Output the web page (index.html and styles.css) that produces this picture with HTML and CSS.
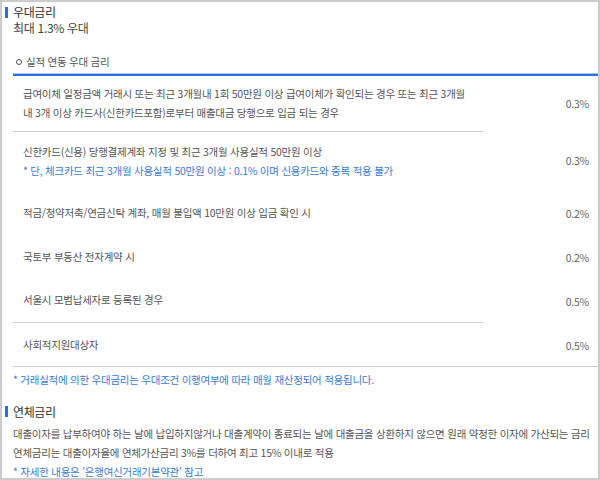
FILE: index.html
```html
<!DOCTYPE html>
<html lang="ko">
<head>
    <meta charset="UTF-8">
    <meta name="viewport" content="width=device-width, initial-scale=1.0">
    <title>우대금리</title>
    <link rel="stylesheet" href="styles.css">
</head>
<body>
    <div class="frame">
        <div class="sec-title"><span class="bar"></span>우대금리</div>
        <p class="sub">최대 1.3% 우대</p>

        <div class="group-title"><span class="dot"></span>실적 연동 우대 금리</div>

        <table class="rate-table">
            <tr class="row-wide">
                <td class="desc line">급여이체 일정금액 거래시 또는 최근 3개월내 1회 50만원 이상 급여이체가 확인되는 경우 또는 최근 3개월<br>내 3개 이상 카드사(신한카드포함)로부터 매출대금 당행으로 입금 되는 경우</td>
                <td class="rate">0.3%</td>
            </tr>
            <tr class="row-card">
                <td class="desc">신한카드(신용) 당행결제계좌 지정 및 최근 3개월 사용실적 50만원 이상
                    <div class="note">* 단, 체크카드 최근 3개월 사용실적 50만원 이상 : 0.1% 이며 신용카드와 중복 적용 불가</div>
                </td>
                <td class="rate">0.3%</td>
            </tr>
            <tr>
                <td class="desc">적금/청약저축/연금신탁 계좌, 매월 불입액 10만원 이상 입금 확인 시</td>
                <td class="rate">0.2%</td>
            </tr>
            <tr>
                <td class="desc">국토부 부동산 전자계약 시</td>
                <td class="rate">0.2%</td>
            </tr>
            <tr>
                <td class="desc line">서울시 모범납세자로 등록된 경우</td>
                <td class="rate">0.5%</td>
            </tr>
            <tr class="last">
                <td class="desc">사회적지원대상자</td>
                <td class="rate">0.5%</td>
            </tr>
        </table>

        <p class="note foot">* 거래실적에 의한 우대금리는 우대조건 이행여부에 따라 매월 재산정되어 적용됩니다.</p>

        <div class="sec-title second"><span class="bar"></span>연체금리</div>
        <p class="text">대출이자를 납부하여야 하는 날에 납입하지않거나 대출계약이 종료되는 날에 대출금을 상환하지 않으면 원래 약정한 이자에 가산되는 금리</p>
        <p class="text">연체금리는 대출이자율에 연체가산금리 3%를 더하여 최고 15% 이내로 적용</p>
        <p class="note">* 자세한 내용은 '은행여신거래기본약관' 참고</p>
    </div>
</body>
</html>
```

FILE: styles.css
```css
* {
    box-sizing: border-box;
}
body {
    margin: 0;
    font-family: "Noto Sans CJK KR", "Noto Sans", sans-serif;
    color: #555;
    background: #fff;
}
p {
    margin: 0;
}
.frame {
    width: 600px;
    height: 480px;
    border: 2px solid #ccc;
    padding: 2px 0 0 11px;
    overflow: hidden;
}
.sec-title {
    display: flex;
    align-items: center;
    margin-left: -8px;
    font-size: 12px;
    line-height: 16px;
    letter-spacing: -0.4px;
    color: #333;
}
.sec-title.second {
    margin-top: 15px;
    margin-bottom: 4px;
}
.bar {
    width: 3px;
    height: 11px;
    margin-right: 5px;
    background: #2f6fdc;
}
.sub {
    font-size: 12px;
    line-height: 16px;
    letter-spacing: -0.3px;
    color: #444;
}
.group-title {
    display: flex;
    align-items: center;
    margin-top: 18px;
    padding-left: 3px;
    font-size: 10.5px;
    line-height: 16px;
    letter-spacing: -0.25px;
}
.dot {
    width: 6px;
    height: 6px;
    margin-right: 4px;
    border: 1px solid #555;
    border-radius: 50%;
}
.rate-table {
    width: 100%;
    margin-top: 4px;
    border-collapse: collapse;
    border-top: 2px solid #2f6fdc;
    box-shadow: 0 -1px 0 #a8c6f0;
    font-size: 10.5px;
    letter-spacing: -0.25px;
    line-height: 19px;
}
.rate-table td {
    height: 44px;
    padding: 0 10px;
    vertical-align: middle;
}
.rate-table .desc {
    width: 470px;
}
.rate-table .rate {
    padding: 3px 9px 0 0;
    text-align: right;
    color: #666;
}
.rate-table .line {
    border-bottom: 1px solid #ccc;
}
.row-wide td {
    height: 56px;
    padding-top: 8px;
    padding-bottom: 9px;
}
.row-card td {
    height: 58px;
    padding-top: 10px;
    padding-bottom: 9px;
}
.rate-table .row-wide .rate,
.rate-table .row-card .rate {
    padding-top: 0;
}
.last td {
    border-bottom: 1px solid #ccc;
}
.note {
    color: #3a7bd5;
    font-size: 10.5px;
    line-height: 20px;
    letter-spacing: -0.25px;
}
.note.foot {
    margin-top: 3px;
    line-height: 19px;
}
.text {
    font-size: 10.5px;
    line-height: 19px;
    letter-spacing: -0.25px;
}
```
